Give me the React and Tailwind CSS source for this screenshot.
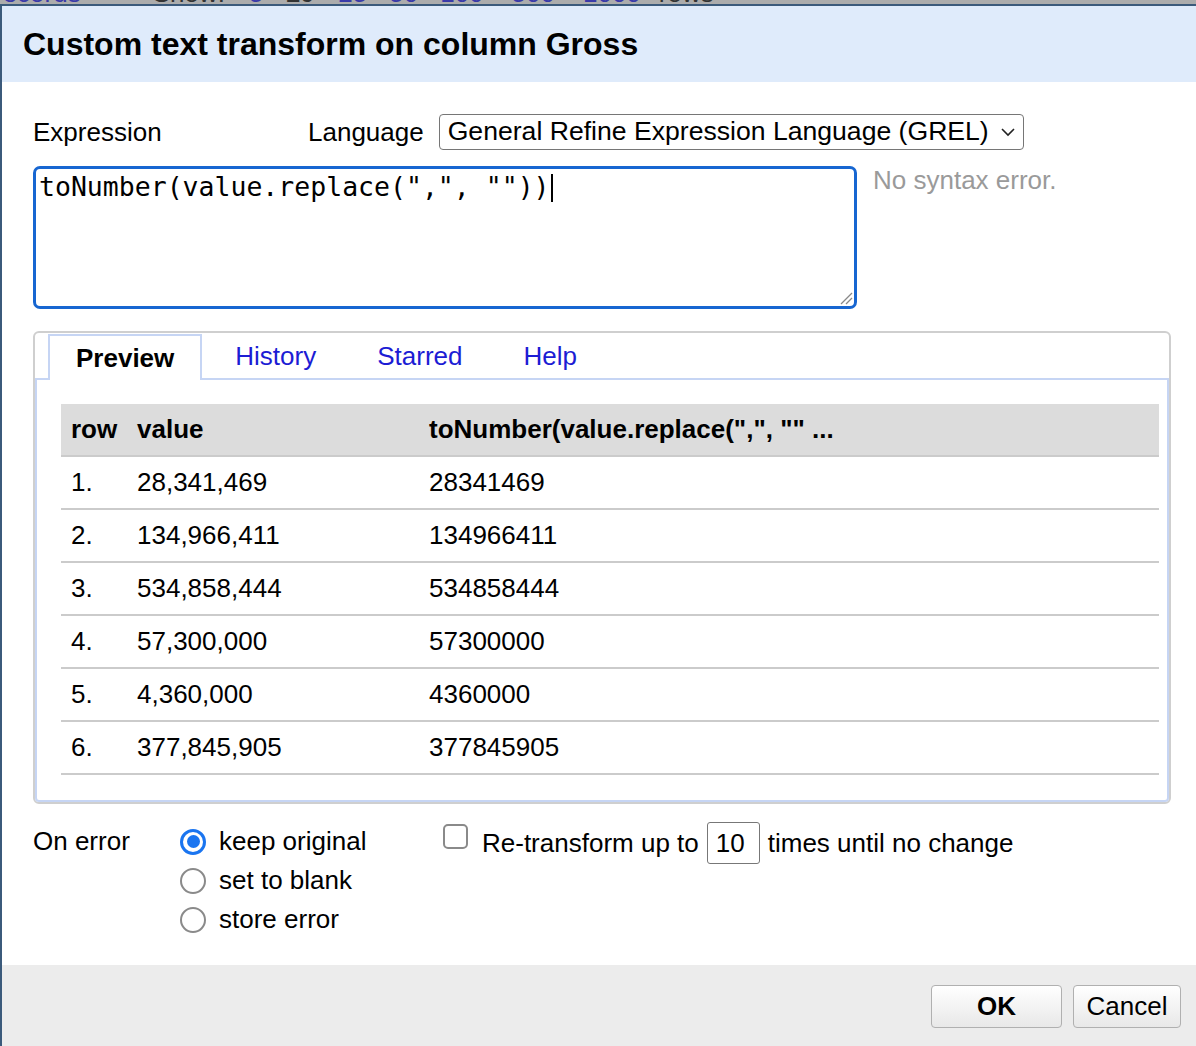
import React from 'react';

// Boîte de dialogue « Custom text transform » (OpenRefine), rendue à l'échelle 2x.

const ROWS = [
  ['1.', '28,341,469', '28341469'],
  ['2.', '134,966,411', '134966411'],
  ['3.', '534,858,444', '534858444'],
  ['4.', '57,300,000', '57300000'],
  ['5.', '4,360,000', '4360000'],
  ['6.', '377,845,905', '377845905']
];

const TABS = ['Preview', 'History', 'Starred', 'Help'];

function Radio({ checked }) {
  if (checked) {
    return (
      <span className="w-[26px] h-[26px] shrink-0 rounded-full border-[3px] border-[#1a75f0] bg-white flex items-center justify-center">
        <span className="w-[13px] h-[13px] rounded-full bg-[#1a75f0]" />
      </span>
    );
  }
  return <span className="w-[26px] h-[26px] shrink-0 rounded-full border-2 border-[#8a8a8a] bg-white" />;
}

function Tabs() {
  return (
    <div className="w-[1138px] border-2 border-[#cfcfcf] rounded-[6px] bg-white">
      <div className="flex pl-[13px] pt-[1px]">
        {TABS.map((t, i) =>
          i === 0 ? (
            <div
              key={t}
              className="relative z-10 -mb-[2px] h-[46px] px-[26px] mr-[5px] flex items-center bg-white border-2 border-b-0 border-[#c6d5f4] font-bold"
            >
              {t}
            </div>
          ) : (
            <div key={t} className="h-[44px] px-[26px] mr-[5px] flex items-center border-2 border-transparent text-[#1c1cd4]">
              {t}
            </div>
          )
        )}
      </div>
      <div className="border-2 border-[#c6d5f4] rounded-b-[4px] pt-[24px] pb-[25px] pl-[24px] pr-[9px]">
        <table className="w-[1098px] border-collapse text-left">
          <thead>
            <tr className="bg-[#dcdcdc] h-[52px] border-b-2 border-[#cbcbcb]">
              <th className="w-[66px] pl-[10px] font-bold">row</th>
              <th className="w-[292px] pl-[10px] font-bold">value</th>
              <th className="pl-[10px] font-bold">toNumber(value.replace(",", "" ...</th>
            </tr>
          </thead>
          <tbody>
            {ROWS.map(([n, v, r]) => (
              <tr key={n} className="h-[53px] border-b-2 border-[#cbcbcb]">
                <td className="pl-[10px]">{n}</td>
                <td className="pl-[10px]">{v}</td>
                <td className="pl-[10px]">{r}</td>
              </tr>
            ))}
          </tbody>
        </table>
      </div>
    </div>
  );
}

export default function App() {
  return (
    <div className="w-[1196px] h-[1046px] overflow-hidden bg-[#acacac] flex flex-col font-['Liberation_Sans',Arial,sans-serif] text-[26px] text-black">
      {/* bas de la page derrière la boîte */}
      <div className="h-[4px] shrink-0 overflow-hidden">
        <div className="-mt-[20px] flex whitespace-nowrap leading-[26px] text-[#333] underline">
          <span className="-ml-[6px] text-[#3a3aa8]">records</span>
          <span className="ml-[72px]">Show:</span>
          <span className="ml-[24px] text-[#3a3aa8]">5</span>
          <span className="ml-[22px] font-bold">10</span>
          <span className="ml-[24px] text-[#3a3aa8]">25</span>
          <span className="ml-[22px] text-[#3a3aa8]">50</span>
          <span className="ml-[22px] text-[#3a3aa8]">100</span>
          <span className="ml-[28px] text-[#3a3aa8]">500</span>
          <span className="ml-[28px] text-[#3a3aa8]">1000</span>
          <span className="ml-[18px]">rows</span>
        </div>
      </div>

      <div className="flex-1 min-h-0 flex flex-col bg-white border-l-2 border-t-2 border-[#3b5a7b]">
        <header className="h-[76px] shrink-0 bg-[#dfebfb] flex items-center pl-[21px]">
          <h1 className="text-[32px] font-bold leading-none">Custom text transform on column Gross</h1>
        </header>

        <main className="flex-1 pl-[31px] pt-[32px]">
          <div className="flex items-center h-[36px]">
            <span className="w-[275px]">Expression</span>
            <span>Language</span>
            <div className="ml-[15px] w-[585px] h-[36px] border-[1.5px] border-[#767676] rounded-[4px] flex items-center justify-between pl-[8px] pr-[7px] whitespace-nowrap">
              <span className="text-[26.6px]">General Refine Expression Language (GREL)</span>
              <svg width="16" height="10" viewBox="0 0 16 10">
                <polyline points="2,2 8,8 14,2" fill="none" stroke="#222" strokeWidth="1.6" />
              </svg>
            </div>
          </div>

          <div className="flex mt-[16px]">
            <div className="relative w-[824px] h-[143px] border-[3px] border-[#1766d1] rounded-[7px] px-[3px] pt-[3px] font-['DejaVu_Sans_Mono',monospace] text-[26.5px] leading-[30px] whitespace-pre">
              <span>toNumber(value.replace(",", ""))</span>
              <span className="inline-block w-[2px] h-[28px] bg-black align-[-6px] ml-[1px]" />
              <svg width="14" height="14" viewBox="0 0 14 14" className="absolute right-[1px] bottom-[1px]">
                <line x1="2" y1="13" x2="13" y2="2" stroke="#888" strokeWidth="1.2" />
                <line x1="7" y1="13" x2="13" y2="7" stroke="#888" strokeWidth="1.2" />
              </svg>
            </div>
            <span className="ml-[16px] leading-[28px] text-[#9a9a9a]">No syntax error.</span>
          </div>

          <div className="mt-[22px]">
            <Tabs />
          </div>

          <div className="flex mt-[18px]">
            <span className="w-[147px] leading-[39px]">On error</span>
            <div className="w-[263px] flex flex-col">
              {[
                ['keep original', true],
                ['set to blank', false],
                ['store error', false]
              ].map(([label, on]) => (
                <div key={label} className="flex items-center h-[39px]">
                  <Radio checked={on} />
                  <span className="ml-[13px]">{label}</span>
                </div>
              ))}
            </div>
            <div className="flex items-center h-[42px] whitespace-nowrap">
              <span className="w-[25px] h-[25px] rounded-[5px] border-2 border-[#8a8a8a] bg-white -mt-[13px]" />
              <span className="ml-[14px]">Re-transform up to</span>
              <span className="ml-[8px] w-[53px] h-[42px] border-[1.5px] border-[#777] rounded-[3px] flex items-center pl-[8px]">10</span>
              <span className="ml-[8px]">times until no change</span>
            </div>
          </div>
        </main>

        <footer className="h-[81px] shrink-0 bg-[#ececec] flex items-start justify-end gap-[11px] pt-[20px] pr-[15px]">
          <button className="w-[131px] h-[43px] border-[1.5px] border-[#b0b0b0] rounded-[4px] bg-gradient-to-b from-[#ffffff] to-[#e8e8e8] font-bold">
            OK
          </button>
          <button className="w-[108px] h-[43px] border-[1.5px] border-[#b0b0b0] rounded-[4px] bg-gradient-to-b from-[#ffffff] to-[#e8e8e8]">
            Cancel
          </button>
        </footer>
      </div>
    </div>
  );
}
